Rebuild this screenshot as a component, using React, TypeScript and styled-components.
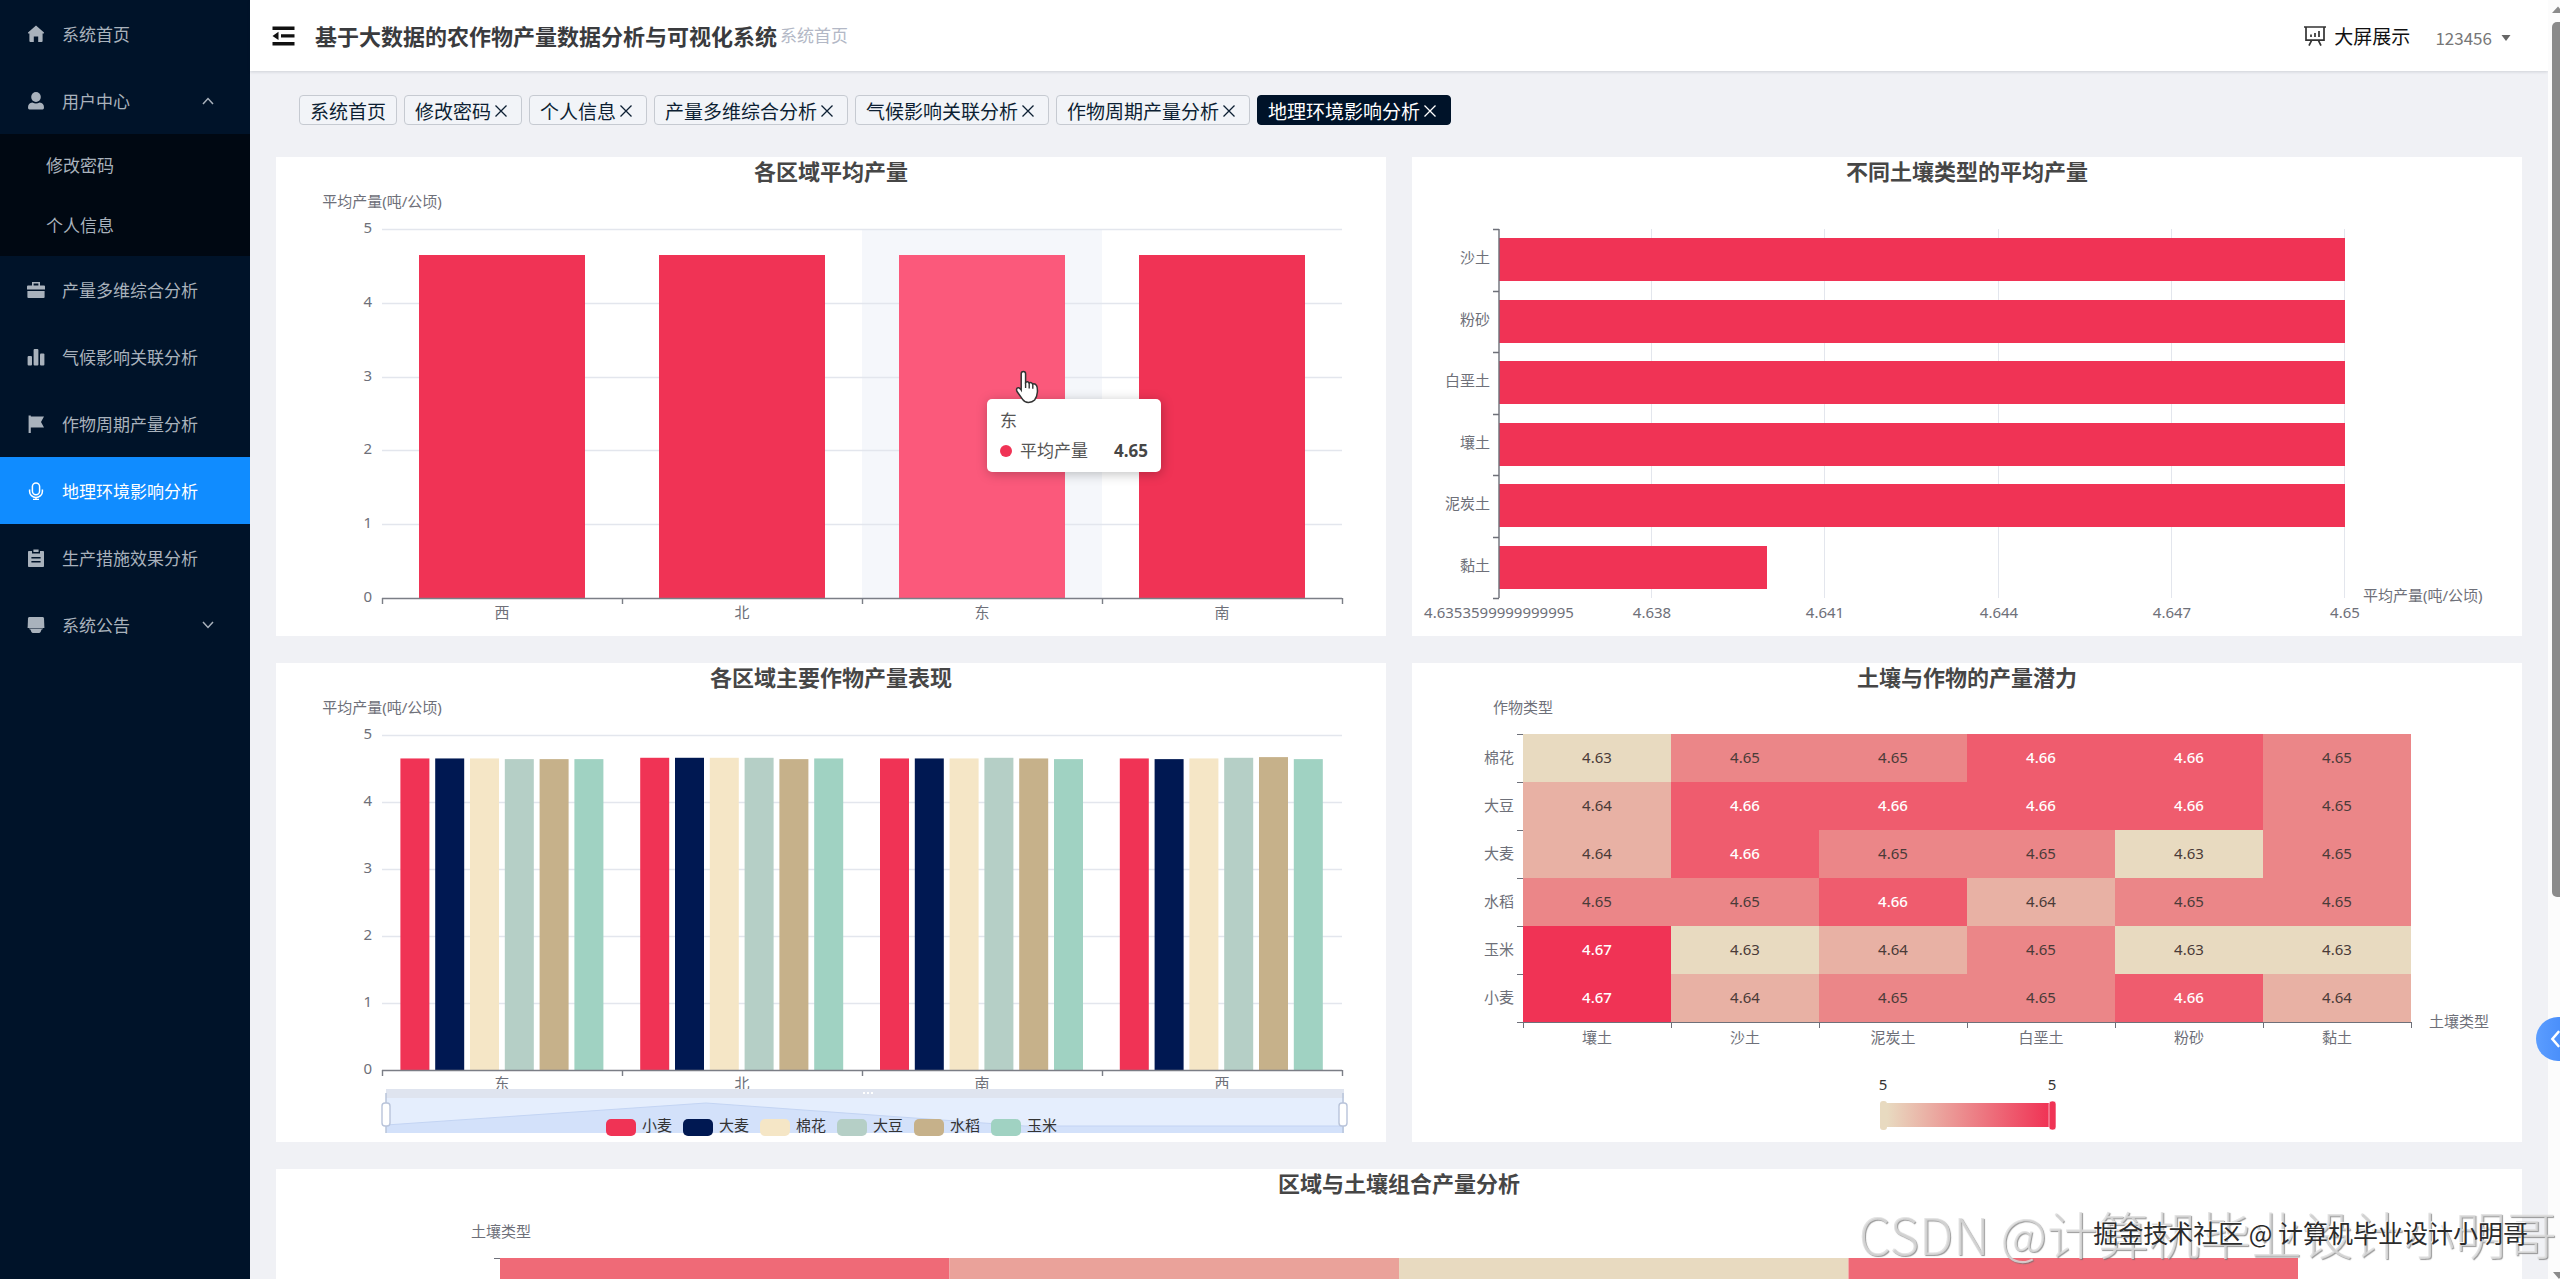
import React from 'react';
import styled, { createGlobalStyle } from 'styled-components';

const RED = '#f03355';
const UI_FONT = '"Noto Sans CJK SC", "Noto Sans", sans-serif';
const CHART_FONT = '"Noto Sans", "Noto Sans CJK SC", sans-serif';

const GlobalStyle = createGlobalStyle`
  * { box-sizing: border-box; }
  body { margin: 0; background: #f0f1f5; font-family: ${UI_FONT}; }
  ul { list-style: none; margin: 0; padding: 0; }
  h1, h2, p { margin: 0; }
  a { color: inherit; text-decoration: none; }
  button { font: inherit; color: inherit; background: none; border: 0; padding: 0; cursor: pointer; }
`;

const Shell = styled.div`
  position: relative;
  display: flex;
  height: 100vh;
  overflow: hidden;
`;

/* ---------- sidebar ---------- */

const Sidebar = styled.nav`
  flex: 0 0 250px;
  background: #001329;
  color: #a9b2bc;
  font-size: 17px;
`;

const MenuLink = styled.a<{ $active?: boolean }>`
  display: flex;
  align-items: center;
  gap: 17px;
  height: 67px;
  padding: 0 36px 0 27px;
  background: ${(p) => (p.$active ? '#108cff' : 'transparent')};
  color: ${(p) => (p.$active ? '#fff' : 'inherit')};
`;

const MenuLabel = styled.span`
  flex: 1;
`;

const SubMenu = styled.ul`
  padding-bottom: 2px;
  background: #000812;
`;

const SubLink = styled.a`
  display: flex;
  align-items: center;
  height: 60px;
  padding-left: 46px;
`;

/* ---------- header ---------- */

const Main = styled.main`
  flex: 1;
  min-width: 0;
  display: flex;
  flex-direction: column;
`;

const Header = styled.header`
  flex: none;
  display: flex;
  align-items: center;
  height: 71px;
  padding: 0 37px 0 22px;
  background: #fff;
  box-shadow: 0 1px 3px rgba(0, 21, 41, 0.14);
`;

const FoldButton = styled.button`
  display: flex;
  margin-right: 20px;
`;

const SystemTitle = styled.h1`
  padding-bottom: 2px;
  font-size: 22px;
  line-height: 32px;
  font-weight: 700;
  color: #3a3b3e;
`;

const Crumb = styled.span`
  flex: 1;
  margin-left: 3px;
  padding-bottom: 2px;
  font-size: 17px;
  color: #b3b8c6;
`;

const ScreenLink = styled.a`
  display: flex;
  align-items: center;
  gap: 8px;
  font-size: 19px;
  color: #111;
`;

const UserButton = styled.button`
  display: flex;
  align-items: center;
  gap: 9px;
  margin-left: 25px;
  padding-top: 5px;
  font-size: 17px;
  line-height: 24px;
  color: #777;
`;

/* ---------- tags ---------- */

const TagBar = styled.ul`
  flex: none;
  display: flex;
  gap: 7px;
  padding: 24px 49px 32px;
`;

const Tag = styled.li<{ $active?: boolean }>`
  display: flex;
  align-items: center;
  height: 30px;
  padding: 2px 10px 0;
  border: 1px solid ${(p) => (p.$active ? '#001329' : '#c6cad1')};
  border-radius: 4px;
  background: ${(p) => (p.$active ? '#001329' : '#f2f4f8')};
  color: ${(p) => (p.$active ? '#fff' : '#0d1f33')};
  font-size: 19px;
  line-height: 26px;
  white-space: nowrap;
`;

const TagClose = styled.button`
  display: flex;
  justify-content: flex-end;
  width: 20px;
  padding-right: 4px;
`;

/* ---------- cards ---------- */

const Board = styled.div`
  display: grid;
  grid-template-columns: 1fr 1fr;
  gap: 27px 26px;
  padding: 0 26px;
`;

const Card = styled.section<{ $wide?: boolean }>`
  position: relative;
  grid-column: ${(p) => (p.$wide ? '1 / -1' : 'auto')};
  background: #fff;
`;

const ChartSvg = styled.svg`
  display: block;
  width: 100%;
  height: auto;
  overflow: visible;
`;

const ChartTitle = styled.text`
  font: 700 22px ${CHART_FONT};
  fill: #464646;
  text-anchor: middle;
  dominant-baseline: middle;
`;

const AxisText = styled.text<{ $anchor?: string }>`
  font: 400 15px ${CHART_FONT};
  fill: #6e7079;
  text-anchor: ${(p) => p.$anchor || 'middle'};
  dominant-baseline: middle;
`;

const LegendText = styled(AxisText)`
  fill: #333;
`;

const CellText = styled(AxisText)<{ $light?: boolean }>`
  fill: ${(p) => (p.$light ? '#fff' : '#4a3b38')};
  font-weight: ${(p) => (p.$light ? 500 : 400)};
`;

const Tooltip = styled.div`
  position: absolute;
  left: 711px;
  top: 242px;
  display: flex;
  flex-direction: column;
  gap: 13px;
  width: 174px;
  padding: 13px;
  border-radius: 5px;
  background: #fff;
  box-shadow: 1px 2px 12px rgba(0, 0, 0, 0.25);
  color: #555;
  font: 400 17px/17px ${CHART_FONT};
`;

const TooltipRow = styled.div`
  display: flex;
  align-items: center;
  gap: 8px;
`;

const Dot = styled.i`
  width: 12px;
  height: 12px;
  border-radius: 50%;
  background: ${RED};
`;

const TooltipValue = styled.b`
  margin-left: auto;
  color: #464646;
`;

const HandCursor = styled.svg`
  position: absolute;
  left: 738px;
  top: 213px;
`;

/* ---------- page overlays ---------- */

const ScrollRail = styled.div`
  flex: 0 0 12px;
  display: flex;
  flex-direction: column;
  padding-left: 4px;
  background: #fcfcfc;
  overflow: hidden;
`;

const ScrollTrack = styled.div`
  flex: 1;
  padding-top: 9px;
`;

const ScrollThumb = styled.div`
  height: 70%;
  border-radius: 5px 0 0 5px;
  background: #8b8b8b;
`;

const Arrow = styled.svg`
  flex: none;
  display: block;
`;

const FloatButton = styled.button`
  position: absolute;
  right: -20px;
  top: 1017px;
  display: flex;
  align-items: center;
  width: 44px;
  height: 44px;
  padding-left: 14px;
  border-radius: 50%;
  background: linear-gradient(90deg, #5b9dff, #3d84f7);
`;

const SiteMark = styled.p`
  position: absolute;
  right: 3px;
  bottom: 16px;
  font-size: 51px;
  line-height: 60px;
  font-weight: 300;
  color: rgba(222, 222, 222, 0.8);
  text-shadow: 1px 1px 1px rgba(110, 110, 110, 0.7);
  white-space: nowrap;
  pointer-events: none;
`;

const AuthorMark = styled.p`
  position: absolute;
  right: 32px;
  bottom: 29px;
  font-size: 25px;
  line-height: 36px;
  color: #2b2b2b;
  text-shadow: -1px -1px 0 rgba(255, 255, 255, 0.9);
  white-space: nowrap;
  pointer-events: none;
`;

/* ---------- icons ---------- */

type IconName = 'home' | 'user' | 'case' | 'bars' | 'flag' | 'mic' | 'clip' | 'platform';

const iconShapes: Record<IconName, React.ReactNode> = {
  home: <path fill="currentColor" d="M9 0.6 L17 7.6 Q17.4 8.6 16.4 8.6 L15.6 8.6 V16 Q15.6 17 14.6 17 H11.2 V11.4 H6.8 V17 H3.4 Q2.4 17 2.4 16 V8.6 H1.6 Q0.6 8.6 1 7.6 Z" />,
  user: (
    <g fill="currentColor">
      <ellipse cx="9" cy="5" rx="4.8" ry="5" />
      <path d="M1 15.6 Q1 11 5.4 10.6 Q9 12.6 12.6 10.6 Q17 11 17 15.6 Q17 17.6 15.6 17.6 H2.4 Q1 17.6 1 15.6 Z" />
    </g>
  ),
  case: (
    <g fill="currentColor">
      <path d="M5 1 H13 V4.4 H17 Q18 4.4 18 5.4 V8.4 H0 V5.4 Q0 4.4 1 4.4 H5 Z M6.6 2.6 V4.4 H11.4 V2.6 Z" fillRule="evenodd" />
      <path d="M0.4 10 H17.6 V16 Q17.6 17 16.6 17 H1.4 Q0.4 17 0.4 16 Z" />
    </g>
  ),
  bars: (
    <g fill="currentColor">
      <rect x="0.6" y="8" width="4.4" height="9.4" rx="1" />
      <rect x="6.6" y="1" width="4.8" height="16.4" rx="1" />
      <rect x="13" y="5.4" width="4.4" height="12" rx="1" />
    </g>
  ),
  flag: <path fill="currentColor" d="M1.6 0.4 H3.8 V1.4 H17 L14 7 L17 12.4 H3.8 V18 H1.6 Z" />,
  mic: (
    <g fill="none" stroke="currentColor" strokeWidth="1.5">
      <rect x="5.4" y="0.9" width="7.2" height="11.8" rx="3.6" />
      <path d="M2.6 7.4 V9.4 A6.4 6 0 0 0 15.4 9.4 V7.4 M9 15.4 V17.6 M6 17.4 H12" />
    </g>
  ),
  clip: (
    <path
      fill="currentColor"
      fillRule="evenodd"
      d="M6.4 0.4 H11.6 V3 H6.4 Z M1.8 2 H5 V4.6 H13 V2 H16.2 Q17 2 17 3 V17 Q17 18 16.2 18 H1.8 Q1 18 1 17 V3 Q1 2 1.8 2 Z M4.4 8 V9.4 H13.6 V8 Z M4.4 12 V13.4 H13.6 V12 Z"
    />
  ),
  platform: (
    <g fill="currentColor">
      <path d="M2.4 1 H15.6 Q16.8 1 17 2.4 L17.4 12 H0.6 L1 2.4 Q1.2 1 2.4 1 Z" />
      <path d="M2 12.6 H16 Q16 13.6 14.6 13.6 L13.6 16 Q13 17 12 17 H6 Q5 17 4.4 16 L3.4 13.6 Q2 13.6 2 12.6 Z" />
    </g>
  ),
};

const Icon = ({ name }: { name: IconName }) => (
  <svg width="18" height="18" viewBox="0 0 18 18" aria-hidden="true">
    {iconShapes[name]}
  </svg>
);

const Chevron = ({ up }: { up?: boolean }) => (
  <svg width="12" height="8" viewBox="0 0 12 8" fill="none" stroke="currentColor" strokeWidth="1.5" aria-hidden="true">
    <path d={up ? 'M1 7 L6 1.6 L11 7' : 'M1 1 L6 6.4 L11 1'} />
  </svg>
);

/* ---------- charts ---------- */

const AxisName = '平均产量(吨/公顷)';

const ValueAxis = ({ top, base }: { top: number; base: number }) => (
  <g>
    {[0, 1, 2, 3, 4, 5].map((v) => {
      const y = Math.round(base - ((base - top) * v) / 5) + 0.5;
      return (
        <g key={v}>
          {v > 0 && <line x1="106" x2="1066" y1={y} y2={y} stroke="#e3e6ed" strokeWidth="1.4" />}
          <AxisText $anchor="end" x="96" y={y - 1}>{v}</AxisText>
        </g>
      );
    })}
  </g>
);

const CategoryAxis = ({ base, labels, labelY }: { base: number; labels: string[]; labelY: number }) => (
  <g>
    <path
      d={`M106 ${base + 0.5} H1066 ` + [0, 1, 2, 3, 4].map((i) => `M${106.5 + i * 240} ${base} v6`).join(' ')}
      stroke="#7b7e86"
      strokeWidth="1.4"
      fill="none"
    />
    {labels.map((l, i) => (
      <AxisText key={l} x={226 + i * 240} y={labelY}>{l}</AxisText>
    ))}
  </g>
);

const RegionChart = () => (
  <ChartSvg viewBox="0 0 1110 479" role="img" aria-label="各区域平均产量">
    <ChartTitle x="555" y="17">各区域平均产量</ChartTitle>
    <AxisText x="106" y="46">{AxisName}</AxisText>
    <rect x="586" y="72" width="240" height="369" fill="#f5f7fb" />
    <ValueAxis top={72} base={441} />
    {[0, 1, 2, 3].map((i) => (
      <rect key={i} x={143 + i * 240} y="98" width="166" height="343" fill={i === 2 ? '#fb597b' : RED} />
    ))}
    <CategoryAxis base={441} labels={['西', '北', '东', '南']} labelY={457} />
  </ChartSvg>
);

const soils = ['沙土', '粉砂', '白垩土', '壤土', '泥炭土', '黏土'];
const soilTicks = [
  { x: 87, label: '4.6353599999999995' },
  { x: 240, label: '4.638' },
  { x: 413, label: '4.641' },
  { x: 587, label: '4.644' },
  { x: 760, label: '4.647' },
  { x: 933, label: '4.65' },
];

const SoilChart = () => (
  <ChartSvg viewBox="0 0 1110 479" role="img" aria-label="不同土壤类型的平均产量">
    <ChartTitle x="555" y="17">不同土壤类型的平均产量</ChartTitle>
    {soilTicks.map((t, i) => (
      <g key={t.label}>
        {i > 0 && <line x1={t.x - 0.5} x2={t.x - 0.5} y1="72" y2="441" stroke="#e3e6ed" />}
        <AxisText x={t.x} y="457">{t.label}</AxisText>
      </g>
    ))}
    {soils.map((s, i) => (
      <g key={s}>
        <rect x="87" y={Math.round(81 + i * 61.5)} width={i === 5 ? 268 : 846} height="43" fill={RED} />
        <AxisText $anchor="end" x="78" y={102 + i * 61.5}>{s}</AxisText>
      </g>
    ))}
    <path
      d={'M87 72 V441 ' + [0, 1, 2, 3, 4, 5, 6].map((i) => `M81 ${Math.round(72 + i * 61.5) + 0.5} h6`).join(' ')}
      stroke="#6e7079"
      strokeWidth="1.4"
      fill="none"
    />
    <AxisText $anchor="start" x="951" y="440">{AxisName}</AxisText>
  </ChartSvg>
);

const crops = [
  { name: '小麦', color: RED, values: [4.65, 4.66, 4.65, 4.65] },
  { name: '大麦', color: '#001852', values: [4.65, 4.66, 4.65, 4.64] },
  { name: '棉花', color: '#f5e6c6', values: [4.65, 4.66, 4.65, 4.65] },
  { name: '大豆', color: '#b5cfc6', values: [4.64, 4.66, 4.66, 4.66] },
  { name: '水稻', color: '#c6b18a', values: [4.64, 4.64, 4.65, 4.67] },
  { name: '玉米', color: '#a0d2c2', values: [4.64, 4.65, 4.64, 4.64] },
];

const CropChart = () => (
  <ChartSvg viewBox="0 0 1110 479" role="img" aria-label="各区域主要作物产量表现">
    <ChartTitle x="555" y="17">各区域主要作物产量表现</ChartTitle>
    <AxisText x="106" y="46">{AxisName}</AxisText>
    <ValueAxis top={72} base={407} />
    {crops.map((c, s) =>
      c.values.map((v, g) => (
        <rect key={`${s}-${g}`} x={124.4 + g * 239.8 + s * 34.8} y={407 - v * 67} width="29" height={v * 67} fill={c.color} />
      ))
    )}
    <CategoryAxis base={407} labels={['东', '北', '南', '西']} labelY={422} />
    <rect x="110" y="426" width="958" height="9" fill="#dfe4ef" />
    <rect x="110" y="435" width="958" height="35" fill="#e5eefd" />
    <path d="M110 462 L430 440 L749 463 H1068 V470 H110 Z" fill="#d3e1fa" />
    <path d="M110 462 L430 440 L749 463 H1068" fill="none" stroke="#c3d4f3" />
    <path d="M587 430 h2 m2 0 h2 m2 0 h2" stroke="#fff" strokeWidth="2" />
    {[110, 1067].map((x) => (
      <g key={x} stroke="#b9c4da">
        <path d={`M${x} 430 V470`} strokeWidth="1.5" />
        <rect x={x - 4} y="440" width="8" height="23" rx="3" fill="#fff" strokeWidth="1.4" />
      </g>
    ))}
    {crops.map((c, i) => (
      <g key={c.name}>
        <rect x={330 + i * 77} y="456" width="30" height="17" rx="5" fill={c.color} />
        <LegendText $anchor="start" x={366 + i * 77} y="464">{c.name}</LegendText>
      </g>
    ))}
  </ChartSvg>
);

const heatColors: Record<string, string> = {
  '4.63': '#e8dac0',
  '4.64': '#e8b1a4',
  '4.65': '#eb8688',
  '4.66': '#ef5c6e',
  '4.67': RED,
};
const heatRows: [string, string[]][] = [
  ['棉花', ['4.63', '4.65', '4.65', '4.66', '4.66', '4.65']],
  ['大豆', ['4.64', '4.66', '4.66', '4.66', '4.66', '4.65']],
  ['大麦', ['4.64', '4.66', '4.65', '4.65', '4.63', '4.65']],
  ['水稻', ['4.65', '4.65', '4.66', '4.64', '4.65', '4.65']],
  ['玉米', ['4.67', '4.63', '4.64', '4.65', '4.63', '4.63']],
  ['小麦', ['4.67', '4.64', '4.65', '4.65', '4.66', '4.64']],
];
const heatCols = ['壤土', '沙土', '泥炭土', '白垩土', '粉砂', '黏土'];

const HeatChart = () => (
  <ChartSvg viewBox="0 0 1110 479" role="img" aria-label="土壤与作物的产量潜力">
    <defs>
      <linearGradient id="heat-scale">
        <stop offset="0" stopColor="#e8dac0" />
        <stop offset="0.5" stopColor="#ec868a" />
        <stop offset="1" stopColor={RED} />
      </linearGradient>
    </defs>
    <ChartTitle x="555" y="17">土壤与作物的产量潜力</ChartTitle>
    <AxisText x="111" y="46">作物类型</AxisText>
    {heatRows.map(([name, values], r) => (
      <g key={name}>
        <AxisText $anchor="end" x="102" y={96 + r * 48}>{name}</AxisText>
        {values.map((v, c) => (
          <g key={c}>
            <rect x={111 + c * 148} y={71 + r * 48} width="148" height="48" fill={heatColors[v]} />
            <CellText $light={v > '4.65'} x={185 + c * 148} y={96 + r * 48}>{v}</CellText>
          </g>
        ))}
      </g>
    ))}
    <path
      d={
        'M111 359.5 H999 ' +
        [0, 1, 2, 3, 4, 5, 6].map((i) => `M105 ${71.5 + i * 48} h6 M${111.5 + i * 148} 359 v6`).join(' ')
      }
      stroke="#6e7079"
      fill="none"
    />
    {heatCols.map((c, i) => (
      <AxisText key={c} x={185 + i * 148} y="376">{c}</AxisText>
    ))}
    <AxisText $anchor="start" x="1017" y="360">土壤类型</AxisText>
    <LegendText x="471" y="423">5</LegendText>
    <LegendText x="640" y="423">5</LegendText>
    <rect x="475" y="440" width="162" height="24" fill="url(#heat-scale)" />
    <rect x="468" y="438" width="7" height="29" rx="3" fill="#e8dac0" />
    <rect x="637" y="438" width="7" height="29" rx="3" fill={RED} stroke="#fff" strokeWidth="0.6" />
  </ChartSvg>
);

const ComboChart = () => (
  <ChartSvg viewBox="0 0 2246 479" role="img" aria-label="区域与土壤组合产量分析">
    <ChartTitle x="1123" y="17">区域与土壤组合产量分析</ChartTitle>
    <AxisText x="225" y="64">土壤类型</AxisText>
    <path d="M218 89.5 h6" stroke="#6e7079" />
    {['#ef6a77', '#eaa29a', '#e8dac0', '#ef6a77'].map((c, i) => (
      <rect key={i} x={224 + i * 449.5} y="89" width="449.5" height="52" fill={c} />
    ))}
  </ChartSvg>
);

/* ---------- page ---------- */

const menuAfter: [IconName, string][] = [
  ['case', '产量多维综合分析'],
  ['bars', '气候影响关联分析'],
  ['flag', '作物周期产量分析'],
  ['mic', '地理环境影响分析'],
  ['clip', '生产措施效果分析'],
];
const current = '地理环境影响分析';
const tags = ['系统首页', '修改密码', '个人信息', '产量多维综合分析', '气候影响关联分析', '作物周期产量分析', current];

export default function App() {
  return (
    <Shell>
      <GlobalStyle />
      <Sidebar>
        <ul>
          <li><MenuLink href="#home"><Icon name="home" /><MenuLabel>系统首页</MenuLabel></MenuLink></li>
          <li>
            <MenuLink href="#user"><Icon name="user" /><MenuLabel>用户中心</MenuLabel><Chevron up /></MenuLink>
            <SubMenu>
              <li><SubLink href="#password">修改密码</SubLink></li>
              <li><SubLink href="#profile">个人信息</SubLink></li>
            </SubMenu>
          </li>
          {menuAfter.map(([icon, label]) => (
            <li key={label}>
              <MenuLink href="#analysis" $active={label === current}><Icon name={icon} /><MenuLabel>{label}</MenuLabel></MenuLink>
            </li>
          ))}
          <li><MenuLink href="#notice"><Icon name="platform" /><MenuLabel>系统公告</MenuLabel><Chevron /></MenuLink></li>
        </ul>
      </Sidebar>

      <Main>
        <Header>
          <FoldButton aria-label="收起菜单">
            <svg width="23" height="20" viewBox="0 0 23 20" fill="#111">
              <path d="M0.5 0.5 H22.5 V4 H0.5 Z M9 8.2 H22.5 V11.6 H9 Z M0.5 16 H22.5 V19.4 H0.5 Z M0.5 9.9 L6.5 5.8 V14 Z" />
            </svg>
          </FoldButton>
          <SystemTitle>基于大数据的农作物产量数据分析与可视化系统</SystemTitle>
          <Crumb>系统首页</Crumb>
          <ScreenLink href="#screen">
            <svg width="22" height="22" viewBox="0 0 22 22" fill="none" stroke="#333" strokeWidth="1.7" aria-hidden="true">
              <path d="M0 2 H22 M2 2 V15.2 H20 V2 M7.6 15.4 L5 20.6 M14.4 15.4 L17 20.6" />
              <path d="M7 9.4 V12 M11 8 V12 M15 6 V12" />
            </svg>
            大屏展示
          </ScreenLink>
          <UserButton>
            123456
            <svg width="10" height="6" viewBox="0 0 10 6" fill="#666" aria-hidden="true"><path d="M0.5 0 H9.5 L5 6 Z" /></svg>
          </UserButton>
        </Header>

        <TagBar>
          {tags.map((t, i) => (
            <Tag key={t} $active={t === current}>
              <a href="#tag">{t}</a>
              {i > 0 && (
                <TagClose aria-label={`关闭${t}`}>
                  <svg width="12" height="12" viewBox="0 0 12 12" stroke="currentColor" strokeWidth="1.3">
                    <path d="M0.5 0.5 L11.5 11.5 M11.5 0.5 L0.5 11.5" />
                  </svg>
                </TagClose>
              )}
            </Tag>
          ))}
        </TagBar>

        <Board>
          <Card>
            <RegionChart />
            <Tooltip role="tooltip">
              <span>东</span>
              <TooltipRow><Dot /><span>平均产量</span><TooltipValue>4.65</TooltipValue></TooltipRow>
            </Tooltip>
            <HandCursor width="26" height="34" viewBox="0 0 26 34" aria-hidden="true">
              <path
                d="M9.4 1.4 Q11.6 1.4 11.6 3.8 V12.4 Q13.6 10.8 15.2 13 Q17.2 11.8 18.6 14 Q21 13 22.6 15.6 Q23.6 17.4 23.4 22 Q23 27 20.6 30 Q18.4 32.4 14.4 32.4 Q10.6 32.4 8.6 29.4 L3.2 21.8 Q2 19.6 3 18.2 Q4.6 16.8 6.8 19.4 L7.2 20 V3.8 Q7.2 1.4 9.4 1.4 Z"
                fill="#fff"
                stroke="#333"
                strokeWidth="1.5"
              />
              <path d="M11.6 12.4 V18 M15.2 13 V18.4 M18.8 14 V18.8" stroke="#333" strokeWidth="1.4" />
            </HandCursor>
          </Card>
          <Card><SoilChart /></Card>
          <Card><CropChart /></Card>
          <Card><HeatChart /></Card>
          <Card $wide><ComboChart /></Card>
        </Board>
      </Main>

      <ScrollRail aria-hidden="true">
        <Arrow width="12" height="13" viewBox="0 0 12 13"><path d="M0 13 L6 6.5 L12 13 Z" fill="#8b8b8b" /></Arrow>
        <ScrollTrack><ScrollThumb /></ScrollTrack>
        <Arrow width="12" height="7" viewBox="0 0 12 7"><path d="M1 0 H12 L7 7 Z" fill="#8b8b8b" /></Arrow>
      </ScrollRail>

      <FloatButton aria-label="展开侧栏">
        <svg width="10" height="18" viewBox="0 0 10 18" fill="none" stroke="#fff" strokeWidth="2.6" strokeLinecap="round">
          <path d="M8.4 2 L2.4 9 L8.4 16" />
        </svg>
      </FloatButton>
      <SiteMark>CSDN @计算机毕业设计小明哥</SiteMark>
      <AuthorMark>掘金技术社区 @ 计算机毕业设计小明哥</AuthorMark>
    </Shell>
  );
}
